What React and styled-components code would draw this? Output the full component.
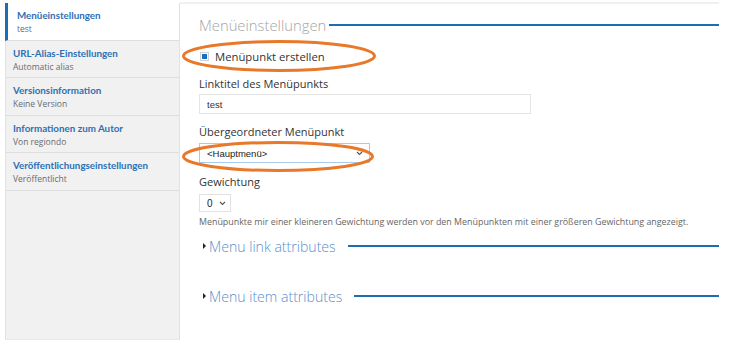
import React from 'react'
import styled, { createGlobalStyle } from 'styled-components'

const GlobalStyle = createGlobalStyle`
    body {
        margin: 0;
        background: #ffffff;
        font-family: "Open Sans", "Liberation Sans", sans-serif;
    }
`;

const Page = styled.div`
    display: flex;
    width: 736px;
    height: 345px;
    box-sizing: border-box;
    padding: 2px 17px 0 5px;
    overflow: hidden;
`;

const Sidebar = styled.div`
    display: flex;
    flex-direction: column;
    width: 175px;
    height: 337px;
    margin-top: 1px;
    box-sizing: border-box;
    background: #f1f1f1;
    border-left: 1px solid #e2e2e2;
    border-right: 1px solid #e2e2e2;
    border-bottom: 1px solid #e8e8e8;
`;

const Tab = styled.div`
    height: 37.5px;
    box-sizing: border-box;
    padding: 5px 8px 0 ${p => (p.$active ? '9px' : '7px')};
    background: ${p => (p.$active ? '#ffffff' : 'transparent')};
    border-left: ${p => (p.$active ? '3px solid #1b6db4' : 'none')};
    margin-left: ${p => (p.$active ? '-1px' : '0')};
    border-bottom: 1px solid #dedede;
`;

const TabTitle = styled.div`
    font-family: Lato, "Open Sans", sans-serif;
    font-size: 9.8px;
    font-weight: 700;
    color: #2f70b3;
    line-height: 15px;
    white-space: nowrap;
`;

const TabSub = styled.div`
    font-size: 8.5px;
    color: #6b6b6b;
    line-height: 12px;
`;

const Main = styled.div`
    position: relative;
    flex: 1;
    box-sizing: border-box;
    border-top: 2px solid #f0f0f0;
    padding-left: 19px;
`;

const Legend = styled.div`
    display: flex;
    align-items: center;
    margin-top: 11px;
    height: 20px;
`;

const LegendText = styled.span`
    font-size: 14.8px;
    font-weight: 300;
    color: #a5a5a5;
    white-space: nowrap;
`;

const BlueLine = styled.div`
    flex: 1;
    height: 2px;
    background: #1e6db1;
    margin-left: ${p => p.$gap || 4}px;
`;

const CheckRow = styled.div`
    display: flex;
    align-items: center;
    margin-top: 12px;
    height: 18px;
`;

const Checkbox = styled.span`
    display: flex;
    align-items: center;
    justify-content: center;
    width: 9px;
    height: 9px;
    box-sizing: border-box;
    border: 1px solid #d2d2d2;
    background: #fff;
    margin-left: 1px;
    margin-right: 6px;

    &::after {
        content: '';
        width: 5px;
        height: 5px;
        background: #1b6fc0;
    }
`;

const CheckLabel = styled.span`
    font-size: 11.3px;
    color: #333;
`;

const Label = styled.div`
    font-size: 11px;
    color: #333;
    line-height: 16px;
    margin-top: ${p => p.$mt}px;
`;

const TextInput = styled.div`
    width: 332px;
    height: 20px;
    box-sizing: border-box;
    margin-top: 2px;
    border: 1px solid #e4e4e4;
    padding-left: 7px;
    display: flex;
    align-items: center;
    font-family: "Liberation Sans", Arial, sans-serif;
    font-size: 9.5px;
    color: #333;
`;

const Select = styled.div`
    width: ${p => p.$w}px;
    height: ${p => p.$h}px;
    box-sizing: border-box;
    margin-top: ${p => p.$mt}px;
    border: 1px solid ${p => (p.$focus ? '#a8cbeb' : '#e2e2e2')};
    padding: 0 ${p => p.$pr || 6}px 0 7px;
    display: flex;
    align-items: center;
    justify-content: space-between;
    font-family: "Liberation Sans", Arial, sans-serif;
    font-size: ${p => p.$fs || 9.5}px;
    color: #222;
`;

const Chevron = () => (
    <svg width="7" height="5" viewBox="0 0 7 5">
        <path d="M1 1 L3.5 3.5 L6 1" fill="none" stroke="#555" strokeWidth="1.1" />
    </svg>
);

const Hint = styled.div`
    margin-top: 4px;
    font-size: 8.9px;
    line-height: 12px;
    color: #666;
    white-space: nowrap;
`;

const Details = styled.div`
    display: flex;
    align-items: center;
    height: 20px;
    margin-top: ${p => p.$mt}px;
    padding-left: 4px;
`;

const Caret = styled.span`
    width: 0;
    height: 0;
    border-top: 3px solid transparent;
    border-bottom: 3px solid transparent;
    border-left: 3px solid #222;
    margin-right: 3px;
`;

const DetailsText = styled.span`
    font-size: 14.1px;
    font-weight: 300;
    color: #5d8fc9;
    white-space: nowrap;
`;

const Mark = styled.svg`
    position: absolute;
    left: ${p => p.$x}px;
    top: ${p => p.$y}px;
    overflow: visible;
    pointer-events: none;
`;

const tabs = [
    { title: 'Menüeinstellungen', sub: 'test', active: true },
    { title: 'URL-Alias-Einstellungen', sub: 'Automatic alias' },
    { title: 'Versionsinformation', sub: 'Keine Version' },
    { title: 'Informationen zum Autor', sub: 'Von regiondo' },
    { title: 'Veröffentlichungseinstellungen', sub: 'Veröffentlicht' },
];

function Ellipse({ x, y, w, h }) {
    return (
        <Mark $x={x} $y={y} width={w} height={h}>
            <ellipse cx={w / 2} cy={h / 2} rx={w / 2 - 1.5} ry={h / 2 - 1.5} fill="none" stroke="#e8792b" strokeWidth="3" />
        </Mark>
    );
}

export default function App() {
    return (
        <>
            <GlobalStyle />
            <Page>
                <Sidebar>
                    {tabs.map(t => (
                        <Tab key={t.title} $active={t.active}>
                            <TabTitle>{t.title}</TabTitle>
                            <TabSub>{t.sub}</TabSub>
                        </Tab>
                    ))}
                </Sidebar>
                <Main>
                    <Legend>
                        <LegendText>Menüeinstellungen</LegendText>
                        <BlueLine $gap={3} />
                    </Legend>
                    <CheckRow>
                        <Checkbox />
                        <CheckLabel>Menüpunkt erstellen</CheckLabel>
                    </CheckRow>
                    <Label $mt={11}>Linktitel des Menüpunkts</Label>
                    <TextInput>test</TextInput>
                    <Label $mt={10}>Übergeordneter Menüpunkt</Label>
                    <Select $w={171} $h={20} $mt={3} $focus>
                        <span>&lt;Hauptmenü&gt;</span>
                        <Chevron />
                    </Select>
                    <Label $mt={11}>Gewichtung</Label>
                    <Select $w={32} $h={18} $mt={4} $fs={10} $pr={4}>
                        <span>0</span>
                        <Chevron />
                    </Select>
                    <Hint>Menüpunkte mir einer kleineren Gewichtung werden vor den Menüpunkten mit einer größeren Gewichtung angezeigt.</Hint>
                    <Details $mt={8}>
                        <Caret />
                        <DetailsText>Menu link attributes</DetailsText>
                        <BlueLine $gap={12} />
                    </Details>
                    <Details $mt={30}>
                        <Caret />
                        <DetailsText>Menu item attributes</DetailsText>
                        <BlueLine $gap={12} />
                    </Details>
                    <Ellipse x={2} y={36} w={194} h={32} />
                    <Ellipse x={2} y={137} w={192} h={31} />
                </Main>
            </Page>
        </>
    )
}
